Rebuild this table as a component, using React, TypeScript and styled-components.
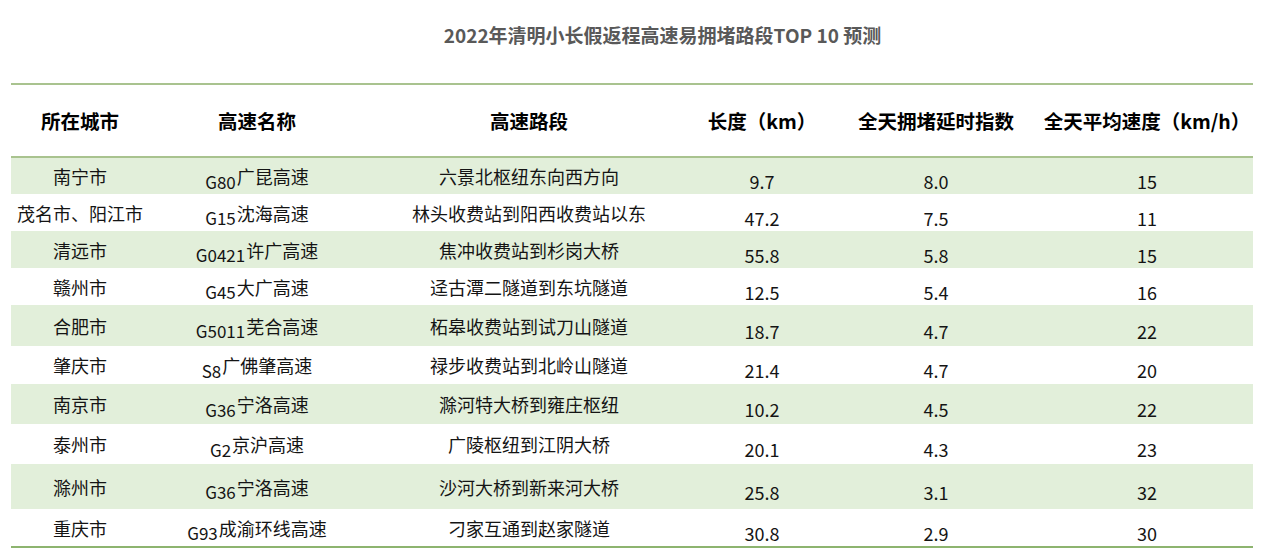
import React from 'react'
import styled, { createGlobalStyle } from 'styled-components'

const GlobalStyle = createGlobalStyle`
  html, body {
    margin: 0;
    padding: 0;
    background: #ffffff;
  }
  body {
    font-family: "Noto Sans CJK SC", "Noto Sans", sans-serif;
    color: #111;
  }
`

type Road = {
  city: string
  code: string
  name: string
  section: string
  length: string
  index: string
  speed: string
  height: number
}

const roads: Road[] = [
  { city: '南宁市', code: 'G80', name: '广昆高速', section: '六景北枢纽东向西方向', length: '9.7', index: '8.0', speed: '15', height: 36 },
  { city: '茂名市、阳江市', code: 'G15', name: '沈海高速', section: '林头收费站到阳西收费站以东', length: '47.2', index: '7.5', speed: '11', height: 37 },
  { city: '清远市', code: 'G0421', name: '许广高速', section: '焦冲收费站到杉岗大桥', length: '55.8', index: '5.8', speed: '15', height: 37 },
  { city: '赣州市', code: 'G45', name: '大广高速', section: '迳古潭二隧道到东坑隧道', length: '12.5', index: '5.4', speed: '16', height: 37 },
  { city: '合肥市', code: 'G5011', name: '芜合高速', section: '柘皋收费站到试刀山隧道', length: '18.7', index: '4.7', speed: '22', height: 41 },
  { city: '肇庆市', code: 'S8', name: '广佛肇高速', section: '禄步收费站到北岭山隧道', length: '21.4', index: '4.7', speed: '20', height: 38 },
  { city: '南京市', code: 'G36', name: '宁洛高速', section: '滁河特大桥到雍庄枢纽', length: '10.2', index: '4.5', speed: '22', height: 40 },
  { city: '泰州市', code: 'G2', name: '京沪高速', section: '广陵枢纽到江阴大桥', length: '20.1', index: '4.3', speed: '23', height: 40 },
  { city: '滁州市', code: 'G36', name: '宁洛高速', section: '沙河大桥到新来河大桥', length: '25.8', index: '3.1', speed: '32', height: 45 },
  { city: '重庆市', code: 'G93', name: '成渝环线高速', section: '刁家互通到赵家隧道', length: '30.8', index: '2.9', speed: '30', height: 37 },
]

const headers = ['所在城市', '高速名称', '高速路段', '长度（km）', '全天拥堵延时指数', '全天平均速度（km/h）']

export default function App() {
  return (
    <Page>
      <GlobalStyle />
      <Title>2022年清明小长假返程高速易拥堵路段TOP 10 预测</Title>
      <Table>
        <HeaderRow>
          {headers.map((h) => (
            <HeadCell key={h}>{h}</HeadCell>
          ))}
        </HeaderRow>
        {roads.map((r, i) => (
          <Row key={r.city + i} $shaded={i % 2 === 0} style={{ height: r.height }}>
            <Cell>{r.city}</Cell>
            <Cell>
              <Code>{r.code}</Code>
              {r.name}
            </Cell>
            <Cell>{r.section}</Cell>
            <Cell $num>{r.length}</Cell>
            <Cell $num>{r.index}</Cell>
            <Cell $num>{r.speed}</Cell>
          </Row>
        ))}
      </Table>
    </Page>
  )
}

const Page = styled.div`
  width: 1270px;
  height: 557px;
  overflow: hidden;
`

const Title = styled.div`
  padding: 24px 0 0 55px;
  height: 59px;
  line-height: 22px;
  text-align: center;
  font-size: 19px;
  font-weight: 700;
  color: #595959;
`

const Table = styled.div`
  margin-left: 11px;
  width: 1242px;
  border-top: 2px solid #a9c38f;
  border-bottom: 2px solid #8db46f;
`

const columns = '138px 216px 328px 138px 210px 212px'

const HeaderRow = styled.div`
  display: grid;
  grid-template-columns: ${columns};
  height: 71px;
  border-bottom: 2px solid #a9c38f;
`

const HeadCell = styled.div`
  display: flex;
  align-items: center;
  justify-content: center;
  font-size: 19.5px;
  font-weight: 700;
  color: #000;
  white-space: nowrap;
`

const Row = styled.div<{ $shaded: boolean }>`
  display: grid;
  grid-template-columns: ${columns};
  background: ${(p) => (p.$shaded ? '#e2efda' : '#ffffff')};
`

const Cell = styled.div<{ $num?: boolean }>`
  display: flex;
  align-items: center;
  justify-content: center;
  font-size: 18px;
  color: #141414;
  white-space: nowrap;
  padding-top: ${(p) => (p.$num ? '10px' : '0')};
`

const Code = styled.span`
  font-size: 17px;
  position: relative;
  top: 5px;
  margin-right: 1px;
`
